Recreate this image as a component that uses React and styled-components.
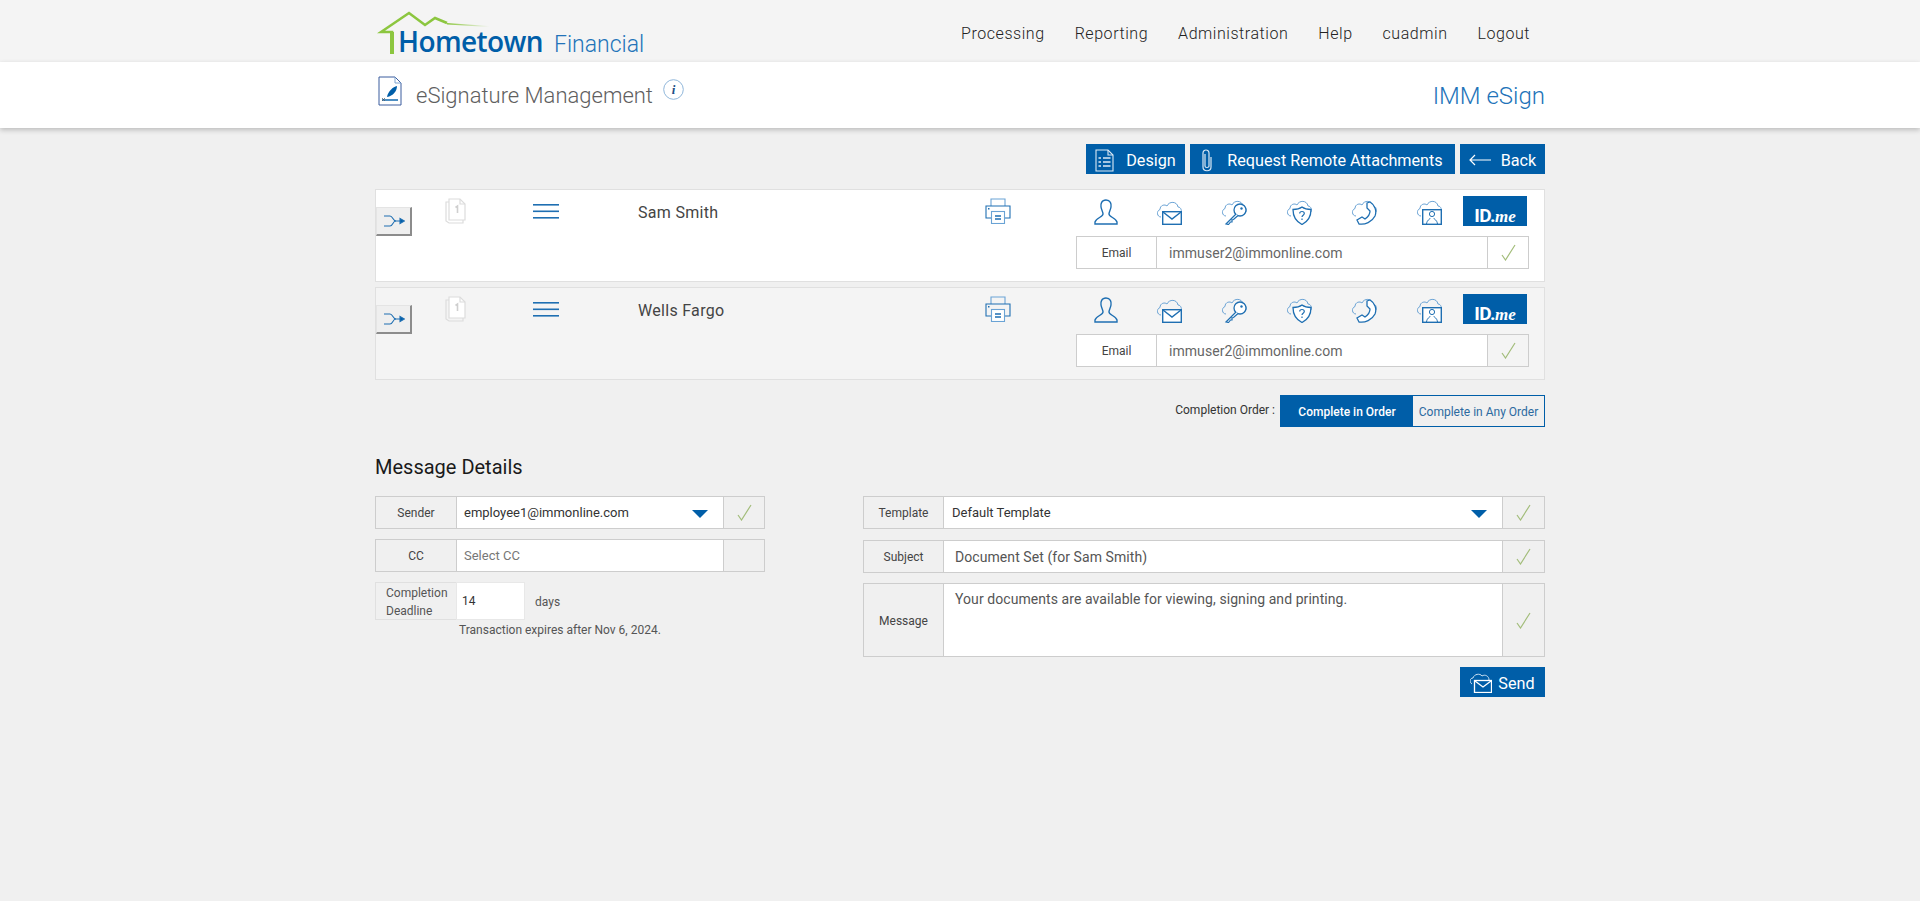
import React from 'react'
import styled, { createGlobalStyle } from 'styled-components'

const BLUE = '#005ea8'
const LINE = '#1f6fb2'
const SOFT = '#6aa3d5'

const GlobalStyle = createGlobalStyle`
  html, body { margin: 0; padding: 0; }
  body {
    background: #f0f0f0;
    font-family: Roboto, "Liberation Sans", sans-serif;
    color: #444;
    min-height: 901px;
  }
  svg { display: block; }
`

const TopBar = styled.div`
  background: #f4f4f4;
  height: 62px;
`

const Wrap = styled.div`
  width: 1170px;
  margin: 0 auto;
`

const TopInner = styled(Wrap)`
  display: flex;
  justify-content: space-between;
  align-items: center;
  height: 100%;
`

const Logo = styled.div`
  position: relative;
  width: 270px;
  height: 62px;
  display: flex;
  align-items: baseline;
  padding: 26px 0 0 23px;
  box-sizing: border-box;
  line-height: 30px;
`

const Roof = styled.svg`
  position: absolute;
  left: 2px;
  top: 0;
`

const LogoBold = styled.span`
  font-family: "Open Sans", sans-serif;
  font-weight: 600;
  font-size: 28px;
  letter-spacing: -0.6px;
  color: ${BLUE};
`

const LogoLight = styled.span`
  font-weight: 300;
  font-size: 23px;
  color: #2273b9;
  margin-left: 11px;
`

const Nav = styled.nav`
  display: flex;
  gap: 30px;
  padding: 4px 15px 0 0;
`

const NavItem = styled.a`
  font-size: 16px;
  font-weight: 300;
  color: #222;
  letter-spacing: 0.55px;
`

const TitleBar = styled.div`
  background: #fff;
  height: 66px;
  box-shadow: 0 2px 5px rgba(0, 0, 0, 0.22);
`

const TitleInner = styled(Wrap)`
  display: flex;
  align-items: flex-start;
  height: 100%;
`

const TitleIcon = styled.div`
  margin: 14px 14px 0 3px;
`

const PageTitle = styled.h1`
  margin: 19px 10px 0 0;
  font-size: 22px;
  font-weight: 300;
  line-height: 30px;
  color: #5f5f5f;
`

const InfoIcon = styled.div`
  margin-top: 17px;
`

const AppName = styled.div`
  margin: 20px 0 0 auto;
  font-size: 24px;
  font-weight: 300;
  line-height: 28px;
  color: #2273b9;
`

const Actions = styled.div`
  display: flex;
  justify-content: flex-end;
  gap: 5px;
  margin: 16px 0 15px;
`

const ActionButton = styled.button`
  display: flex;
  align-items: center;
  justify-content: center;
  gap: ${p => p.$gap || 12}px;
  width: ${p => p.$w}px;
  height: 30px;
  padding: 2px 0 0;
  border: 0;
  background: ${BLUE};
  color: #fff;
  font-family: Roboto, sans-serif;
  font-size: 16.2px;
`

const Recipient = styled.div`
  display: grid;
  grid-template-columns: 69px 88px 105px 347px 60px 1fr;
  height: 93px;
  box-sizing: border-box;
  margin-bottom: 5px;
  background: ${p => (p.$alt ? '#f4f4f4' : '#fff')};
  border: 1px solid #e0e0e0;
`

const ArrowButton = styled.button`
  width: 36px;
  height: 29px;
  margin-top: 17px;
  padding: 0 0 0 7px;
  background: #efefef;
  border: 1px solid #e4e4e4;
  border-right: 2px solid #8c8c8c;
  border-bottom: 2px solid #8c8c8c;
`

const CellIcon = styled.div`
  padding-top: ${p => p.$top || 8}px;
`

const Name = styled.div`
  font-size: 16px;
  line-height: 20px;
  padding-top: 13px;
  color: #444;
  letter-spacing: 0.3px;
`

const SignerCol = styled.div`
  display: flex;
  flex-direction: column;
  align-items: flex-end;
  padding: 6px 15px 0 0;
`

const AuthIcons = styled.div`
  display: flex;
  align-items: flex-end;
  height: 30px;
`

const AuthIcon = styled.div`
  width: 65px;
  display: flex;
  justify-content: center;
  padding: 0 0 1px ${p => p.$nudge || 0}px;
  box-sizing: border-box;
`

const IdMe = styled.div`
  width: 64px;
  height: 30px;
  margin: 0 2px 0 2px;
  background: ${BLUE};
  color: #fff;
  display: flex;
  align-items: baseline;
  justify-content: center;
  padding-top: 10px;
  box-sizing: border-box;
  line-height: 20px;
`

const IdBold = styled.span`
  font-weight: 700;
  font-size: 19px;
  letter-spacing: -0.5px;
`

const IdItalic = styled.span`
  font-family: "Liberation Serif", serif;
  font-style: italic;
  font-weight: 700;
  font-size: 17px;
`

const Field = styled.div`
  display: grid;
  grid-template-columns: ${p => p.$label}px 1fr ${p => p.$check}px;
  width: ${p => p.$width || '100%'};
  height: ${p => p.$height}px;
  box-sizing: border-box;
  margin-top: ${p => p.$top || 0}px;
  border: 1px solid #cdcdcd;
  background: #fff;
`

const FieldLabel = styled.div`
  display: flex;
  align-items: center;
  justify-content: center;
  padding-top: 1px;
  font-size: 12px;
  color: #444;
  background: ${p => (p.$plain ? 'transparent' : '#f0f0f0')};
  border-right: 1px solid #cdcdcd;
`

const FieldValue = styled.div`
  display: flex;
  align-items: ${p => (p.$top ? 'flex-start' : 'center')};
  justify-content: space-between;
  padding: ${p => (p.$top ? '7px 16px 0 11px' : `0 ${p.$right || 15}px 0 ${p.$left || 8}px`)};
  font-size: ${p => p.$size || 13}px;
  letter-spacing: ${p => p.$spacing || 0}px;
  color: ${p => p.$color || '#333'};
  background: #fff;
`

const CheckCell = styled.div`
  display: flex;
  align-items: center;
  justify-content: center;
  background: ${p => p.$bg || '#f0f0f0'};
  border-left: 1px solid #cdcdcd;
`

const Caret = styled.span`
  width: 0;
  height: 0;
  margin-top: 2px;
  border-left: 8px solid transparent;
  border-right: 8px solid transparent;
  border-top: 8px solid ${BLUE};
`

const OrderRow = styled.div`
  display: flex;
  justify-content: flex-end;
  align-items: center;
  margin-top: 15px;
`

const OrderLabel = styled.span`
  font-size: 12px;
  color: #333;
  margin: 0 5px 3px 0;
`

const OrderToggle = styled.div`
  display: flex;
  height: 32px;
  box-sizing: border-box;
  border: 1px solid ${BLUE};
`

const OrderOption = styled.div`
  display: flex;
  align-items: center;
  justify-content: center;
  padding-top: 1px;
  width: ${p => p.$w}px;
  font-size: 12px;
  font-weight: ${p => (p.$active ? 500 : 400)};
  background: ${p => (p.$active ? BLUE : 'transparent')};
  color: ${p => (p.$active ? '#fff' : '#2c6aa0')};
`

const SectionTitle = styled.h2`
  margin: 29px 0 18px;
  font-size: 20px;
  line-height: 22px;
  font-weight: 400;
  color: #1a1a1a;
`

const Columns = styled.div`
  display: flex;
  justify-content: space-between;
  align-items: flex-start;
`

const LeftCol = styled.div`
  width: 390px;
`

const RightCol = styled.div`
  width: 682px;
`

const DeadlineRow = styled.div`
  display: flex;
  margin-top: 10px;
  align-items: center;
`

const DeadlineLabel = styled.div`
  width: 81px;
  height: 38px;
  box-sizing: border-box;
  border: 1px solid #e0e0e0;
  border-right: 0;
  padding: 1px 0 0 10px;
  font-size: 12px;
  line-height: 18px;
  color: #555;
  text-align: left;
`

const DeadlineInput = styled.div`
  width: 69px;
  height: 38px;
  box-sizing: border-box;
  background: #fff;
  border: 1px solid #e8e8e8;
  padding: 11px 0 0 5px;
  font-size: 12px;
  color: #333;
`

const Days = styled.span`
  font-size: 12px;
  color: #555;
  margin: 1px 0 0 10px;
`

const Expires = styled.div`
  font-size: 12px;
  color: #555;
  margin: 3px 0 0 84px;
`

const SendRow = styled.div`
  display: flex;
  justify-content: flex-end;
  margin-top: 10px;
`

const Check = () => (
  <svg width="15" height="17" viewBox="0 0 15 17" fill="none">
    <path d="M1 11 L4.5 16 L14 1" stroke="#a3bd7b" strokeWidth="1.2" />
  </svg>
)

const Cloud = ({ color = SOFT }) => (
  <path d="M5 17 C1 17 0 11 4 9.5 C4 5 9 4 11 6 C13 1 21 1 22 7 C25 7 26 11 25 13" fill="none" stroke={color} strokeWidth="1" />
)

const PersonIcon = () => (
  <svg width="24" height="26" viewBox="0 0 24 26" fill="none" stroke={LINE} strokeWidth="1.4">
    <path d="M12 1 C7.5 1 6.5 5 7 8 C7.5 11 9 13 9 15 C9 18 2 19 1 23 V25 H23 V23 C22 19 15 18 15 15 C15 13 16.5 11 17 8 C17.5 5 16.5 1 12 1 Z" />
  </svg>
)

const MailIcon = () => (
  <svg width="26" height="25" viewBox="0 0 26 25" fill="none">
    <Cloud />
    <rect x="6.7" y="11.7" width="18.6" height="12.6" fill="#fff" stroke={LINE} strokeWidth="1.4" />
    <path d="M7 12 L16 19 L25 12" stroke={LINE} strokeWidth="1.4" />
  </svg>
)

const KeyIcon = () => (
  <svg width="26" height="26" viewBox="0 0 26 26" fill="none">
    <Cloud />
    <circle cx="19" cy="11" r="6" fill="#fff" stroke={LINE} strokeWidth="1.3" />
    <circle cx="20.5" cy="9.5" r="1.2" fill={LINE} />
    <path d="M15 15 L5 25 L7.5 25.5 L9.5 23 L11 23 L11 21 L12.5 20.5 L17 16.5" fill="#fff" stroke={LINE} strokeWidth="1.2" />
  </svg>
)

const ShieldIcon = () => (
  <svg width="26" height="26" viewBox="0 0 26 26" fill="none">
    <Cloud />
    <path d="M16 8 C18 9.5 21 10.5 25 10.5 C25 17 23 22 16 25.5 C9 22 7 17 7 10.5 C11 10.5 14 9.5 16 8 Z" fill="#fff" stroke={LINE} strokeWidth="1.3" />
    <path d="M13.7 14.5 C13.7 11.8 18.3 11.8 18.3 14.5 C18.3 16.2 16 16.2 16 18 M16 19.5 V21" stroke={LINE} strokeWidth="1.2" />
  </svg>
)

const PhoneIcon = () => (
  <svg width="26" height="26" viewBox="0 0 26 26" fill="none">
    <Cloud />
    <path d="M16 4 L19 3 C24 6 26 12 24 17 C21 23 14 26 8 25 L6 21 L11 18 L14 20 C17 18 19 15 19 12 L16 9 Z" fill="#fff" stroke={LINE} strokeWidth="1.3" />
  </svg>
)

const VideoIcon = () => (
  <svg width="26" height="26" viewBox="0 0 26 26" fill="none">
    <Cloud />
    <rect x="6.7" y="10.7" width="18.6" height="14.6" fill="#fff" stroke={LINE} strokeWidth="1.4" />
    <circle cx="16" cy="15" r="2.6" stroke={LINE} />
    <path d="M10.5 25 C11 21 13.5 20.5 14.5 19 M21.5 25 C21 21 18.5 20.5 17.5 19" stroke={LINE} />
  </svg>
)

const PrinterIcon = () => (
  <svg width="26" height="26" viewBox="0 0 26 26" fill="none" stroke={SOFT} strokeWidth="1.1">
    <path d="M6 8 V1 H20 V8" />
    <path d="M6 20 H1 V8 H25 V20 H20" stroke={LINE} />
    <rect x="6.5" y="13.5" width="13" height="12" fill="#fff" />
    <path d="M10 18 H16 M10 21 H16" stroke={LINE} strokeWidth="1.3" />
    <rect x="3" y="10" width="1.5" height="1.5" fill={LINE} stroke="none" />
  </svg>
)

const DocStackIcon = () => (
  <svg width="21" height="26" viewBox="0 0 21 26" fill="none" stroke="#dcdcdc" strokeWidth="1.2">
    <path d="M4 4 H1 V23 L4 25 H18 V22" />
    <path d="M4 1 H15 L20 6 V22 H4 Z" fill="#fff" />
    <path d="M15 1 V6 H20" />
    <path d="M10.5 9.5 L12.5 8 V15" stroke="#cfcfcf" strokeWidth="1.6" />
  </svg>
)

const MenuLines = () => (
  <svg width="26" height="15" viewBox="0 0 26 15" fill={LINE}>
    <rect x="0" y="0" width="26" height="1.6" />
    <rect x="0" y="6.5" width="26" height="1.6" />
    <rect x="0" y="13" width="26" height="1.6" />
  </svg>
)

const RouteIcon = () => (
  <svg width="21" height="12" viewBox="0 0 21 12" fill="none" stroke={LINE} strokeWidth="1.1">
    <path d="M0 1 H6 C9 1 8.5 6 12 6 H17" />
    <path d="M0 11 H6 C9 11 8.5 6 12 6" />
    <path d="M16 3.5 L20.5 6 L16 8.5 Z" fill={BLUE} />
  </svg>
)

const SignDocIcon = () => (
  <svg width="24" height="30" viewBox="0 0 24 30" fill="none">
    <path d="M1 1 H17 L23 7 V29 H1 Z" stroke="#3b5c9e" strokeWidth="1" />
    <path d="M17 1 V7 H23" stroke="#7fa5d0" />
    <path d="M9 21 C10 15 15 11 19 10 C19 15 15 20 9 21 Z" fill={BLUE} />
    <path d="M4 24 H20" stroke={BLUE} strokeWidth="1.4" />
    <path d="M4 22 L7 25 M7 22 L4 25" stroke="#555" strokeWidth="0.7" />
  </svg>
)

const InfoBadge = () => (
  <svg width="21" height="21" viewBox="0 0 21 21" fill="none">
    <circle cx="10.5" cy="10.5" r="9.8" stroke="#8fb6da" />
    <text x="10.5" y="15" textAnchor="middle" fontFamily="Liberation Serif, serif" fontStyle="italic" fontWeight="700" fontSize="13" fill="#1d4f85">i</text>
  </svg>
)

const DesignIcon = () => (
  <svg width="19" height="23" viewBox="0 0 19 23" fill="none" stroke="#dbe9f5" strokeWidth="1.1">
    <path d="M1 1 H13 L18 6 V22 H1 Z" />
    <path d="M13 1 V6 H18" />
    <path d="M3.5 9 H6 M8 9 H15.5 M3.5 13 H6 M8 13 H15.5 M3.5 17 H6 M8 17 H15.5" strokeWidth="1.5" />
  </svg>
)

const ClipIcon = () => (
  <svg width="10" height="23" viewBox="0 0 10 23" fill="none" stroke="#dbe9f5" strokeWidth="1.2">
    <path d="M3 5 V17 C3 19 7 19 7 17 V4 C7 0 1 0 1 4 V18 C1 23 9 23 9 18 V8" />
  </svg>
)

const BackArrow = () => (
  <svg width="22" height="12" viewBox="0 0 22 12" fill="none" stroke="#fff" strokeWidth="1.2">
    <path d="M22 6 H1 M6 1 L1 6 L6 11" />
  </svg>
)

const SendIcon = () => (
  <svg width="22" height="20" viewBox="0 0 22 20" fill="none">
    <path d="M2 11 C-1 9 0 5 3 5 C4 1 10 0 12 3 C15 1 19 3 19 7" stroke="#cfe2f3" strokeWidth="1" />
    <rect x="4.5" y="7.5" width="17" height="12" fill={BLUE} stroke="#fff" strokeWidth="1.3" />
    <path d="M5 8 L13 14 L21 8" stroke="#fff" strokeWidth="1.3" />
  </svg>
)

function Signer({ name, alt }) {
  const bg = alt ? '#f4f4f4' : '#fff'
  return (
    <Recipient $alt={alt}>
      <ArrowButton><RouteIcon /></ArrowButton>
      <CellIcon><DocStackIcon /></CellIcon>
      <CellIcon $top={14}><MenuLines /></CellIcon>
      <Name>{name}</Name>
      <CellIcon><PrinterIcon /></CellIcon>
      <SignerCol>
        <AuthIcons>
          <AuthIcon $nudge={4}><PersonIcon /></AuthIcon>
          <AuthIcon><MailIcon /></AuthIcon>
          <AuthIcon><KeyIcon /></AuthIcon>
          <AuthIcon><ShieldIcon /></AuthIcon>
          <AuthIcon><PhoneIcon /></AuthIcon>
          <AuthIcon><VideoIcon /></AuthIcon>
          <IdMe><IdBold>ID.</IdBold><IdItalic>me</IdItalic></IdMe>
        </AuthIcons>
        <Field $label={80} $check={41} $height={33} $width="453px" $top={10}>
          <FieldLabel $plain>Email</FieldLabel>
          <FieldValue $size={14} $left={12} $spacing={0.05} $color="#666">immuser2@immonline.com</FieldValue>
          <CheckCell $bg={bg}><Check /></CheckCell>
        </Field>
      </SignerCol>
    </Recipient>
  )
}

function App() {
  return (
    <>
      <GlobalStyle />
      <TopBar>
        <TopInner>
          <Logo>
            <Roof width="130" height="62" viewBox="0 0 130 62" fill="none">
              <defs>
                <linearGradient id="roofFade" x1="0" x2="1" y1="0" y2="0">
                  <stop offset="0" stopColor="#8cc63f" />
                  <stop offset="1" stopColor="#8cc63f" stopOpacity="0" />
                </linearGradient>
              </defs>
              <path d="M15 54 V32 H4 L32 13 L48 25 L58 18 L70 23" stroke="#8cc63f" strokeWidth="2.6" />
              <path d="M15 32 V54" stroke="#8cc63f" strokeWidth="4" />
              <path d="M70 23 L112 26 V27 L70 24.5 Z" fill="url(#roofFade)" />
            </Roof>
            <LogoBold>Hometown</LogoBold>
            <LogoLight>Financial</LogoLight>
          </Logo>
          <Nav>
            <NavItem>Processing</NavItem>
            <NavItem>Reporting</NavItem>
            <NavItem>Administration</NavItem>
            <NavItem>Help</NavItem>
            <NavItem>cuadmin</NavItem>
            <NavItem>Logout</NavItem>
          </Nav>
        </TopInner>
      </TopBar>
      <TitleBar>
        <TitleInner>
          <TitleIcon><SignDocIcon /></TitleIcon>
          <PageTitle>eSignature Management</PageTitle>
          <InfoIcon><InfoBadge /></InfoIcon>
          <AppName>IMM eSign</AppName>
        </TitleInner>
      </TitleBar>
      <Wrap>
        <Actions>
          <ActionButton $w={99}><DesignIcon />Design</ActionButton>
          <ActionButton $w={265} $gap={15}><ClipIcon />Request Remote Attachments</ActionButton>
          <ActionButton $w={85} $gap={10}><BackArrow />Back</ActionButton>
        </Actions>

        <Signer name="Sam Smith" />
        <Signer name="Wells Fargo" alt />

        <OrderRow>
          <OrderLabel>Completion Order :</OrderLabel>
          <OrderToggle>
            <OrderOption $active $w={132}>Complete in Order</OrderOption>
            <OrderOption $w={131}>Complete in Any Order</OrderOption>
          </OrderToggle>
        </OrderRow>

        <SectionTitle>Message Details</SectionTitle>

        <Columns>
          <LeftCol>
            <Field $label={81} $check={41} $height={33}>
              <FieldLabel>Sender</FieldLabel>
              <FieldValue $left={7}>employee1@immonline.com<Caret /></FieldValue>
              <CheckCell><Check /></CheckCell>
            </Field>
            <Field $label={81} $check={41} $height={33} $top={10}>
              <FieldLabel>CC</FieldLabel>
              <FieldValue $left={7} $color="#777">Select CC</FieldValue>
              <CheckCell />
            </Field>
            <DeadlineRow>
              <DeadlineLabel>Completion Deadline</DeadlineLabel>
              <DeadlineInput>14</DeadlineInput>
              <Days>days</Days>
            </DeadlineRow>
            <Expires>Transaction expires after Nov 6, 2024.</Expires>
          </LeftCol>
          <RightCol>
            <Field $label={80} $check={42} $height={33}>
              <FieldLabel>Template</FieldLabel>
              <FieldValue>Default Template<Caret /></FieldValue>
              <CheckCell><Check /></CheckCell>
            </Field>
            <Field $label={80} $check={42} $height={33} $top={11}>
              <FieldLabel>Subject</FieldLabel>
              <FieldValue $size={14} $left={11} $spacing={0.07} $color="#555">Document Set (for Sam Smith)</FieldValue>
              <CheckCell><Check /></CheckCell>
            </Field>
            <Field $label={80} $check={42} $height={74} $top={10}>
              <FieldLabel>Message</FieldLabel>
              <FieldValue $top $size={14} $spacing={0.07} $color="#555">Your documents are available for viewing, signing and printing.</FieldValue>
              <CheckCell><Check /></CheckCell>
            </Field>
            <SendRow>
              <ActionButton $w={85} $gap={6}><SendIcon />Send</ActionButton>
            </SendRow>
          </RightCol>
        </Columns>
      </Wrap>
    </>
  )
}

export default App
